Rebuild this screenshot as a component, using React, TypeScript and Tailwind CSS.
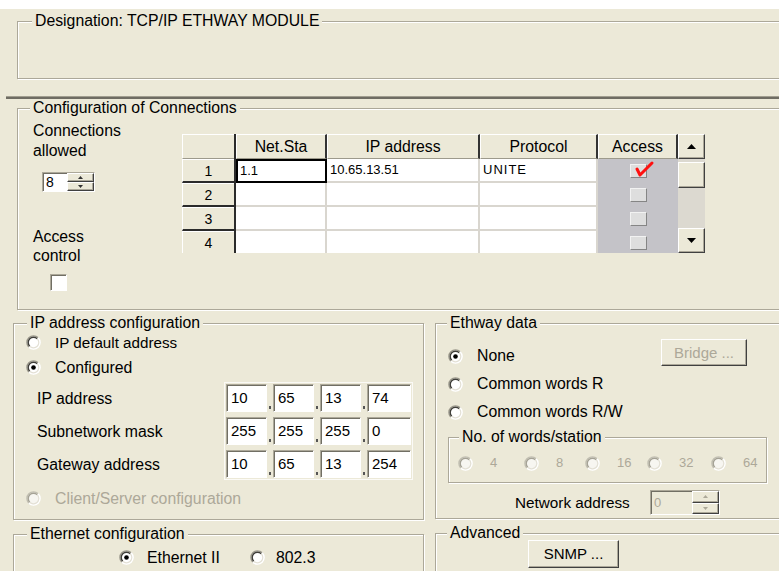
import React from "react";

const raised =
  "border border-t-white border-l-white border-r-[#404040] border-b-[#404040] shadow-[inset_-1px_-1px_0_#aca899] bg-[#ECE9D8]";
const sunken =
  "border border-t-[#aca899] border-l-[#aca899] border-r-white border-b-white shadow-[inset_1px_1px_0_#716f64]";

function Group({
  title,
  className,
  legend,
  children,
}: {
  title: string;
  className: string;
  legend: string;
  children?: React.ReactNode;
}) {
  return (
    <div
      className={`relative shrink-0 border border-[#aca899] shadow-[1px_1px_0_#ffffff,inset_1px_1px_0_#ffffff] ${className}`}
    >
      <span
        className={`absolute -top-[10px] bg-[#ECE9D8] px-[3px] leading-[18px] whitespace-nowrap ${legend}`}
      >
        {title}
      </span>
      {children}
    </div>
  );
}

// Classic sunken option button
function Radio({ checked = false, disabled = false }: { checked?: boolean; disabled?: boolean }) {
  const c = 7.5;
  const k = 0.7071;
  const tl = (r: number) =>
    `M ${c - r * k} ${c + r * k} A ${r} ${r} 0 0 1 ${c + r * k} ${c - r * k}`;
  const br = (r: number) =>
    `M ${c + r * k} ${c - r * k} A ${r} ${r} 0 0 1 ${c - r * k} ${c + r * k}`;
  return (
    <svg width="15" height="15" viewBox="0 0 15 15" className="shrink-0">
      <circle cx={c} cy={c} r={6.8} fill={disabled ? "#f7f6f1" : "#ffffff"} />
      <path d={tl(6.6)} stroke={disabled ? "#c2bfb2" : "#9a978a"} strokeWidth="1.4" fill="none" />
      <path d={tl(5.3)} stroke={disabled ? "#a5a295" : "#3f3e39"} strokeWidth="1.4" fill="none" />
      <path d={br(6.6)} stroke="#ffffff" strokeWidth="1.4" fill="none" />
      <path d={br(5.3)} stroke="#e4e1d6" strokeWidth="1.2" fill="none" />
      {checked && <circle cx={c} cy={c} r={2.3} fill="#000000" />}
    </svg>
  );
}

function Tri({ up }: { up?: boolean }) {
  return (
    <svg width="9" height="5" viewBox="0 0 9 5">
      <path d={up ? "M0 5 L4.5 0 L9 5 Z" : "M0 0 L9 0 L4.5 5 Z"} fill="#000000" />
    </svg>
  );
}

function TinyTri({ up, color }: { up?: boolean; color: string }) {
  return (
    <svg width="5" height="3" viewBox="0 0 5 3">
      <path d={up ? "M0 3 L2.5 0 L5 3 Z" : "M0 0 L5 0 L2.5 3 Z"} fill={color} />
    </svg>
  );
}

function IpField({ parts }: { parts: string[] }) {
  return (
    <div className="flex h-[28px]">
      {parts.map((p, i) => (
        <React.Fragment key={i}>
          {i > 0 && (
            <div className="w-[6px] relative">
              <div className="absolute left-[2px] bottom-[3px] w-[2px] h-[3px] bg-[#555555]" />
            </div>
          )}
          <div
            className={`${sunken} ${i === 3 ? "w-[44px]" : "w-[41px]"} bg-white flex items-center pl-[4px] text-[15px]`}
          >
            {p}
          </div>
        </React.Fragment>
      ))}
    </div>
  );
}

const rows = [
  { n: "1", sta: "1.1", ip: "10.65.13.51", proto: "UNITE", access: true },
  { n: "2", sta: "", ip: "", proto: "", access: false },
  { n: "3", sta: "", ip: "", proto: "", access: false },
  { n: "4", sta: "", ip: "", proto: "", access: false },
];

const hdr =
  "flex items-center justify-center bg-[#ECE9D8] border-t border-l border-b border-r-2 border-t-white border-l-white border-b-[#9d9a8c] border-r-[#333333]";
const dataCell = "bg-white border-r-2 border-b-2 border-[#d9d6cf] flex items-center pl-[3px] text-[13px]";

function ConnTable() {
  return (
    <div className="flex mt-[13px] h-[119px] overflow-hidden">
      <div className="w-[496px] flex flex-col">
        <div className="flex h-[25px] shrink-0">
          <div className="w-[52px] bg-[#ECE9D8] border-t border-l border-b border-t-white border-l-white border-b-[#9d9a8c]" />
          <div className="w-[2px] bg-[#2b2b2b]" />
          <div className={`${hdr} w-[91px]`}>Net.Sta</div>
          <div className={`${hdr} w-[153px]`}>IP address</div>
          <div className={`${hdr} w-[118px]`}>Protocol</div>
          <div className={`${hdr} w-[80px]`}>Access</div>
        </div>
        {rows.map((r, i) => (
          <div key={r.n} className="flex h-[24px] shrink-0">
            <div className="w-[52px] flex items-center justify-center bg-[#ECE9D8] border-t border-l border-b-2 border-t-white border-l-white border-b-[#2b2b2b] text-[14px]">
              {r.n}
            </div>
            <div className="w-[2px] bg-[#2b2b2b]" />
            {i === 0 ? (
              <div className="w-[91px] bg-white border-2 border-black flex items-center pl-[2px] text-[13px]">
                {r.sta}
              </div>
            ) : (
              <div className={`${dataCell} w-[91px]`}>{r.sta}</div>
            )}
            <div className={`${dataCell} w-[153px]`}>{r.ip}</div>
            <div className={`${dataCell} w-[118px] tracking-[1px]`}>{r.proto}</div>
            <div className="w-[80px] bg-[#c4c3c8] flex items-center justify-center">
              <div className="relative w-[17px] h-[14px] bg-[#dedede] border border-t-[#f2f2f2] border-l-[#f2f2f2] border-r-[#858585] border-b-[#858585]">
                {r.access && (
                  <svg
                    width="24"
                    height="20"
                    viewBox="0 0 24 20"
                    className="absolute left-[1px] -top-[6px]"
                  >
                    <path
                      d="M5 10 L8 16 L20 4"
                      stroke="#ff1010"
                      strokeWidth="3"
                      fill="none"
                      strokeLinecap="round"
                      strokeLinejoin="round"
                    />
                  </svg>
                )}
              </div>
            </div>
          </div>
        ))}
      </div>
      <div className="w-[27px] flex flex-col">
        <div className={`${raised} h-[25px] shrink-0 flex items-center justify-center`}>
          <Tri up />
        </div>
        <div className="h-[3px] shrink-0 bg-[#dcd9d0]" />
        <div className={`${raised} h-[26px] shrink-0`} />
        <div className="flex-1 bg-[#dcd9d0]" />
        <div className={`${raised} h-[25px] shrink-0 flex items-center justify-center`}>
          <Tri />
        </div>
      </div>
    </div>
  );
}

export default function App() {
  return (
    <div className="w-[779px] h-[571px] overflow-hidden bg-[#ECE9D8] text-black text-[15.8px] leading-[18px] font-['Liberation_Sans',Arial,sans-serif] flex flex-col">
      <div className="h-[9px] bg-white shrink-0" />

      <Group
        className="mt-[12px] ml-[17px] w-[800px] h-[58px]"
        legend="left-[14px]"
        title="Designation: TCP/IP ETHWAY MODULE"
      />

      <div className="mt-[17px] ml-[6px] w-[800px] h-[3px] shrink-0 border-t border-t-[#a19e90] bg-[#6f6d63]" />

      <Group
        className="mt-[9px] ml-[17px] w-[800px] h-[202px]"
        legend="left-[12px]"
        title="Configuration of Connections"
      >
        <div className="flex items-start pl-[15px] pt-[12px]">
          <div className="w-[149px] flex flex-col shrink-0">
            <div className="leading-[20px]">
              Connections
              <br />
              allowed
            </div>
            <div className={`${sunken} mt-[11px] ml-[9px] w-[53px] h-[20px] bg-white flex`}>
              <div className="flex-1 flex items-center pl-[3px] text-[14px]">8</div>
              <div className="w-[27px] flex flex-col">
                <div className={`${raised} flex-1 flex items-center justify-center`}>
                  <TinyTri up color="#333333" />
                </div>
                <div className={`${raised} flex-1 flex items-center justify-center`}>
                  <TinyTri color="#333333" />
                </div>
              </div>
            </div>
            <div className="mt-[35px] leading-[19px]">
              Access
              <br />
              control
            </div>
            <div className={`${sunken} mt-[9px] ml-[17px] w-[17px] h-[17px] bg-white`} />
          </div>
          <ConnTable />
        </div>
      </Group>

      <div className="flex mt-[13px] shrink-0">
        {/* left column */}
        <div className="ml-[13px] w-[411px] flex flex-col shrink-0">
          <Group className="w-[411px] h-[197px]" legend="left-[13px]" title="IP address configuration">
            <div className="flex flex-col pt-[6px]">
              <div className="h-[25px] flex items-center pl-[12px]">
                <Radio />
                <span className="ml-[14px] text-[15.2px]">IP default address</span>
              </div>
              <div className="h-[25px] flex items-center pl-[12px]">
                <Radio checked />
                <span className="ml-[14px]">Configured</span>
              </div>
              <div className="mt-[2px] flex">
                <div className="w-[210px] pl-[23px] pt-[3px] flex flex-col gap-[5px]">
                  <div className="h-[28px] flex items-center">IP address</div>
                  <div className="h-[28px] flex items-center">Subnetwork mask</div>
                  <div className="h-[28px] flex items-center">Gateway address</div>
                </div>
                <div className="border border-[#fbfaf6] p-[1px] flex flex-col gap-[5px]">
                  <IpField parts={["10", "65", "13", "74"]} />
                  <IpField parts={["255", "255", "255", "0"]} />
                  <IpField parts={["10", "65", "13", "254"]} />
                </div>
              </div>
              <div className="mt-[6px] h-[25px] flex items-center pl-[12px] text-[#aca899]">
                <Radio disabled />
                <span className="ml-[14px]">Client/Server configuration</span>
              </div>
            </div>
          </Group>

          <Group className="mt-[14px] w-[411px] h-[60px]" legend="left-[13px]" title="Ethernet configuration">
            <div className="flex items-center h-[25px] mt-[10px] pl-[105px]">
              <div className="w-[131px] flex items-center">
                <Radio checked />
                <span className="ml-[13px]">Ethernet II</span>
              </div>
              <div className="flex items-center">
                <Radio />
                <span className="ml-[11px]">802.3</span>
              </div>
            </div>
          </Group>
        </div>

        {/* right column */}
        <div className="ml-[11px] w-[800px] flex flex-col shrink-0">
          <Group className="w-[800px] h-[196px]" legend="left-[11px]" title="Ethway data">
            <div className="flex items-start">
              <div className="w-[225px] pt-[18px] pl-[12px] flex flex-col">
                <div className="h-[28px] flex items-center">
                  <Radio checked />
                  <span className="ml-[14px]">None</span>
                </div>
                <div className="h-[28px] flex items-center">
                  <Radio />
                  <span className="ml-[14px]">Common words R</span>
                </div>
                <div className="h-[28px] flex items-center">
                  <Radio />
                  <span className="ml-[14px]">Common words R/W</span>
                </div>
              </div>
              <div
                className={`${raised} mt-[15px] w-[86px] h-[27px] flex items-center justify-center text-[#aca899] text-[15px]`}
              >
                Bridge ...
              </div>
            </div>

            <Group
              className="mt-[11px] ml-[12px] w-[319px] h-[46px]"
              legend="left-[10px]"
              title="No. of words/station"
            >
              <div className="flex items-center h-[20px] mt-[15px] pl-[9px] text-[13px] text-[#aca899]">
                <div className="w-[66px] flex items-center">
                  <Radio disabled />
                  <span className="ml-[17px]">4</span>
                </div>
                <div className="w-[61px] flex items-center">
                  <Radio disabled />
                  <span className="ml-[17px]">8</span>
                </div>
                <div className="w-[62px] flex items-center">
                  <Radio disabled />
                  <span className="ml-[17px]">16</span>
                </div>
                <div className="w-[64px] flex items-center">
                  <Radio disabled />
                  <span className="ml-[17px]">32</span>
                </div>
                <div className="flex items-center">
                  <Radio disabled />
                  <span className="ml-[17px]">64</span>
                </div>
              </div>
            </Group>

            <div className="mt-[7px] h-[25px] flex items-center pl-[79px]">
              <div className="w-[135px] text-[15.3px]">Network address</div>
              <div className={`${sunken} w-[70px] h-[25px] flex bg-[#ECE9D8]`}>
                <div className="flex-1 flex items-center pl-[3px] text-[13px] text-[#aca899]">0</div>
                <div className="w-[27px] flex flex-col">
                  <div className={`${raised} flex-1 flex items-center justify-center`}>
                    <TinyTri up color="#aca899" />
                  </div>
                  <div className={`${raised} flex-1 flex items-center justify-center`}>
                    <TinyTri color="#aca899" />
                  </div>
                </div>
              </div>
            </div>
          </Group>

          <Group className="mt-[14px] w-[800px] h-[60px]" legend="left-[11px]" title="Advanced">
            <div
              className={`${raised} ml-[92px] mt-[6px] w-[91px] h-[28px] flex items-center justify-center text-[15px]`}
            >
              SNMP ...
            </div>
          </Group>
        </div>
      </div>
    </div>
  );
}
